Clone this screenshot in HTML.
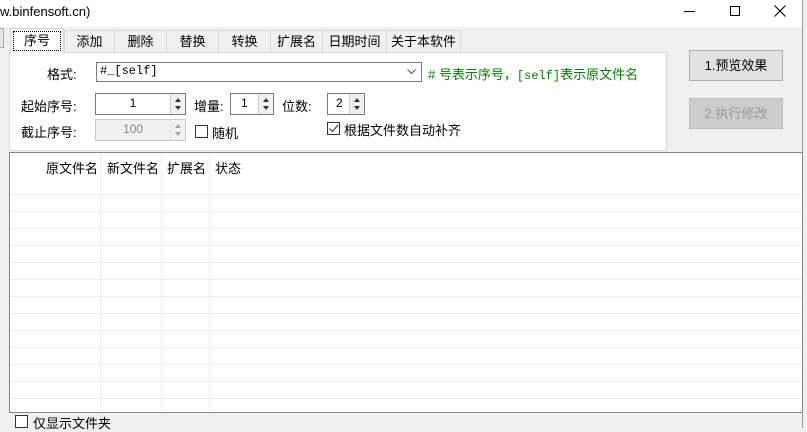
<!DOCTYPE html>
<html><head><meta charset="utf-8"><style>
*{margin:0;padding:0;box-sizing:border-box}
body{width:807px;height:428px;overflow:hidden;background:#f0f0f0;font-family:"Liberation Sans","Noto Sans CJK SC",sans-serif;font-size:12px;color:#000;position:relative}
.a{position:absolute}
.tb{left:0;top:0;width:802px;height:27px;background:#fff}
.tab{position:absolute;top:30px;height:22px;border:1px solid #d9d9d9;border-bottom:none;background:#f0f0f0;text-align:center;line-height:21px;font-size:13px}
.panel{left:9px;top:52px;width:658px;height:99px;background:#fff;border:1px solid #d9d9d9}
.box{position:absolute;background:#fff;border:1px solid #7a7a7a}
.spin{position:absolute;right:0;top:0;width:15px;height:100%;background:#f0f0f0;border-left:1px solid #ccc}
.spin:before,.spin:after{content:"";position:absolute;left:4px;border-left:3px solid transparent;border-right:3px solid transparent}
.spin:before{top:4px;border-bottom:4px solid #333}
.spin:after{bottom:4px;border-top:4px solid #333}
.cb{position:absolute;width:13px;height:13px;border:1px solid #333;background:#fff}
.btn{position:absolute;left:689px;width:94px;height:31px;border:1px solid #adadad;background:#e1e1e1;text-align:center;line-height:29px;font-size:13px}
.hl{position:absolute;left:10px;width:792px;height:1px;background:#efefef}
.vl{position:absolute;top:153px;width:1px;height:258px;background:#efefef}
.m{font-family:"Liberation Mono",monospace;font-size:12px}
</style></head><body>
<div class="a tb"></div>
<div class="a" style="left:0;top:4px;font-size:13px">w.binfensoft.cn)</div>
<div class="a" style="left:684px;top:11px;width:11px;height:1px;background:#000"></div>
<div class="a" style="left:730px;top:6px;width:10px;height:10px;border:1px solid #000"></div>
<svg class="a" style="left:774px;top:5px" width="12" height="12"><path d="M0.5 0.5L11.5 11.5M11.5 0.5L0.5 11.5" stroke="#000" stroke-width="1.1"/></svg>
<div class="a" style="left:802px;top:0;width:1px;height:428px;background:#999"></div>
<div class="a" style="left:0;top:28px;width:4px;height:20px;border:1px solid #aaa;border-left:none;background:#e4e4e4"></div>

<div class="a panel"></div>
<div class="tab" style="left:64px;width:51px">添加</div>
<div class="tab" style="left:114px;width:53px">删除</div>
<div class="tab" style="left:166px;width:53px">替换</div>
<div class="tab" style="left:218px;width:53px">转换</div>
<div class="tab" style="left:270px;width:53px">扩展名</div>
<div class="tab" style="left:322px;width:65px">日期时间</div>
<div class="tab" style="left:386px;width:75px">关于本软件</div>
<div class="tab" style="left:10px;top:28px;width:54px;height:25px;background:#fff;border-color:#d9d9d9"><div style="margin:2px;border:1px dotted #000;line-height:18px">序号</div></div>

<div class="a" style="left:47px;top:64px;font-size:13px">格式:</div>
<div class="box m" style="left:96px;top:62px;width:326px;height:20px;padding:1px 3px">#_[self]<svg style="position:absolute;right:5px;top:6px" width="9" height="6"><path d="M0.5 0.5L4.5 4.5L8.5 0.5" fill="none" stroke="#555"/></svg></div>
<div class="a" style="left:428px;top:64px;color:#008000;font-size:13px"># 号表示序号，<span class="m">[self]</span>表示原文件名</div>

<div class="a" style="left:21px;top:96px;font-size:13px">起始序号:</div>
<div class="box" style="left:95px;top:93px;width:91px;height:22px;text-align:center;padding-right:15px;line-height:19px">1<div class="spin"></div></div>
<div class="a" style="left:194px;top:96px;font-size:13px">增量:</div>
<div class="box" style="left:230px;top:93px;width:44px;height:22px;padding-left:10px;line-height:19px">1<div class="spin"></div></div>
<div class="a" style="left:282px;top:96px;font-size:13px">位数:</div>
<div class="box" style="left:327px;top:93px;width:38px;height:22px;padding-left:8px;line-height:19px">2<div class="spin"></div></div>
<div class="a" style="left:21px;top:122px;font-size:13px">截止序号:</div>
<div class="box" style="left:95px;top:119px;width:91px;height:22px;text-align:center;padding-right:15px;line-height:19px;background:#f0f0f0;border-color:#ccc;color:#888">100<div class="spin" style="opacity:.4"></div></div>
<div class="cb" style="left:195px;top:125px"></div>
<div class="a" style="left:212px;top:123px;font-size:13px">随机</div>
<div class="cb" style="left:327px;top:122px"><svg width="11" height="11" style="position:absolute;left:0;top:0"><path d="M1.5 5.5L4.5 8.5L10 2" fill="none" stroke="#333" stroke-width="1.1"/></svg></div>
<div class="a" style="left:344px;top:120px;font-size:13px">根据文件数自动补齐</div>

<div class="btn" style="top:50px">1.预览效果</div>
<div class="btn" style="top:98px;background:#ccc;border-color:#bfbfbf;color:#999">2.执行修改</div>

<div class="a" style="left:9px;top:152px;width:794px;height:261px;background:#fff;border:1px solid #828790"></div>
<div class="a" style="left:46px;top:158px;font-size:13px">原文件名</div>
<div class="a" style="left:107px;top:158px;font-size:13px">新文件名</div>
<div class="a" style="left:167px;top:158px;font-size:13px">扩展名</div>
<div class="a" style="left:215px;top:158px;font-size:13px">状态</div>
<div class="vl" style="left:100px"></div><div class="vl" style="left:161px"></div><div class="vl" style="left:209px"></div>
<div class="hl" style="top:194px"></div><div class="hl" style="top:211px"></div><div class="hl" style="top:228px"></div><div class="hl" style="top:245px"></div><div class="hl" style="top:262px"></div><div class="hl" style="top:279px"></div><div class="hl" style="top:296px"></div><div class="hl" style="top:313px"></div><div class="hl" style="top:330px"></div><div class="hl" style="top:347px"></div><div class="hl" style="top:364px"></div><div class="hl" style="top:381px"></div><div class="hl" style="top:398px"></div>

<div class="cb" style="left:15px;top:415px"></div>
<div class="a" style="left:33px;top:413px;font-size:13px">仅显示文件夹</div>
</body></html>
